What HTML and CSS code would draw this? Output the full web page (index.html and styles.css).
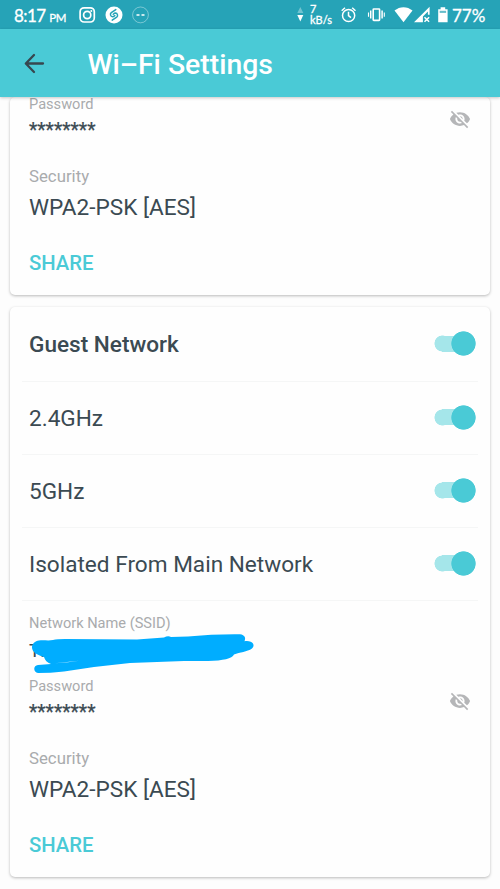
FILE: index.html
```html
<!DOCTYPE html>
<html lang="en">
<head>
<meta charset="utf-8">
<title>Wi–Fi Settings</title>
<link rel="stylesheet" href="styles.css">
</head>
<body>
<div class="status">
  <span class="clock">8:17 <small>PM</small></span>
  <svg class="apps" width="72" height="20" viewBox="78 5 72 20" fill="none" stroke="#fff">
    <rect x="80.1" y="7.8" width="14.2" height="14.2" rx="4" stroke-width="1.7"/>
    <circle cx="87.2" cy="15" r="3.6" stroke-width="1.7"/><circle cx="91.3" cy="10.9" r="1" fill="#fff" stroke="none"/>
    <circle cx="114" cy="14.9" r="8.5" fill="#fff" stroke="none"/>
    <path d="M115.800 9.600L111.300 12.600C109.600 14 110.600 16.600 112.500 16.700C113.700 16.700 114.300 16 114.800 15.500M112.200 20.200L116.700 17.200C118.400 15.800 117.400 13.200 115.500 13.100C114.300 13.100 113.700 13.800 113.200 14.300" stroke="#26a3b7" stroke-width="1.500" stroke-linecap="round"/>
    <circle cx="140.500" cy="14.900" r="7.900" stroke-opacity=".38" stroke-width="1"/>
    <path d="M136.500 15h3M141.500 15h3" stroke-width="1.700"/>
  </svg>
  <svg class="speed-arrows" width="8" height="18" viewBox="296 7 8 18" fill="#fff"><path opacity=".35" d="M300.300 8l3 6h-6z"/><path d="M297.300 16h6l-3 6.500z"/></svg>
  <span class="speed"><span>7</span><span>kB/s</span></span>
  <svg class="system" width="110" height="22" viewBox="340 4 110 22" fill="none" stroke="#fff">
    <circle cx="348.600" cy="15.500" r="6.100" stroke-width="1.500"/><path d="M348.500 11.700v4l2.500 2M341.700 10.700l3.300-2.900M355.500 10.700l-3.300-2.900" stroke-width="1.500"/>
    <rect x="373.200" y="9" width="6.400" height="11.400" rx=".6" stroke-width="1.600"/><path d="M370.700 10.500v8M382.100 10.500v8" stroke-width="1.500"/><path d="M368.500 12.500v4.200M384.300 12.500v4.200" stroke-width="1.100"/>
    <path d="M394.500 10.500c5.400-4.500 12.600-4.500 18 0l-9 11.800z" fill="#fff" stroke="none"/>
    <path d="M414 22.300L429.600 6.700v8h-1.700v-3.200l-5 5v5.800z" fill="#fff" stroke="none"/>
    <path d="M424.500 17.200l4.600 4.600M429.100 17.200l-4.600 4.600" stroke-width="1.500"/>
    <path d="M438.200 9.300h2.400V7.200h4.600v2.100h2.400v13h-9.400z" fill="#fff" stroke="none"/><path d="M439.700 10.800h6.400v2.100h-6.400z" fill="#66bdca" stroke="none"/>
  </svg>
  <span class="battery">77%</span>
</div>
<header class="toolbar">
  <svg class="back" width="22" height="22" viewBox="0 0 22 22" fill="none" stroke="#37474f" stroke-width="2.300" stroke-linecap="round" stroke-linejoin="round"><path d="M20 10.500H3M11 2L2.800 10.500L11 19"/></svg>
  <h1>Wi–Fi Settings</h1>
</header>
<main>
  <section class="card first">
    <div class="details">
      <div class="label">Password</div>
      <div class="secret"><span>********</span>
        <svg class="eye" viewBox="0 0 24 24"><path d="M12 7c2.760 0 5 2.240 5 5 0 .650-.130 1.260-.360 1.830l2.920 2.920c1.510-1.260 2.700-2.890 3.430-4.750-1.730-4.390-6-7.500-11-7.500-1.400 0-2.740.250-3.980.700l2.160 2.160C10.740 7.130 11.350 7 12 7zM2 4.270l2.280 2.280.460.460C3.080 8.300 1.780 10.020 1 12c1.730 4.390 6 7.500 11 7.500 1.550 0 3.030-.300 4.380-.840l.420.420L19.730 22 21 20.730 3.270 3 2 4.270zM7.530 9.800l1.550 1.550c-.050.210-.080.430-.080.650 0 1.660 1.340 3 3 3 .220 0 .440-.030.650-.080l1.550 1.550c-.670.330-1.410.530-2.200.530-2.760 0-5-2.240-5-5 0-.790.200-1.530.530-2.200zm4.310-.780l3.150 3.150.020-.160c0-1.660-1.340-3-3-3l-.170.010z"/></svg>
      </div>
      <div class="label security">Security</div>
      <div class="value">WPA2-PSK [AES]</div>
      <div class="share">SHARE</div>
    </div>
  </section>
  <section class="card">
    <div class="row heading"><span>Guest Network</span><i class="switch"></i></div>
    <div class="row"><span>2.4GHz</span><i class="switch"></i></div>
    <div class="row"><span>5GHz</span><i class="switch"></i></div>
    <div class="row"><span>Isolated From Main Network</span><i class="switch"></i></div>
    <div class="details">
      <div class="label">Network Name (SSID)</div>
      <div class="ssid">Ti
        <svg class="scribble" width="226" height="42" viewBox="30 632 226 42" fill="#00adff"><path d="M39 640.500C44 640 49 641 53 640Q57 639 65 639L137 639.500L164 637.500Q168 635.500 171 637L188 636.500Q214 634 240 634.300C245 635 246 638 244.500 641.300C252 640 256 645 252 648.500C247 652 240 652 234 654.500Q231 660.500 208 661L184 661L130 663L94 667L64 671.500Q50 673 38 673C33 672 33 665.500 38 665L51 664C47 662.500 45 660.500 44 657C37 655 32 652 32 647.500C32 643.500 35 641 39 640.500Z"/><path d="M55 663.300L79 660.800L68 662.300Z" fill="#fefefe"/></svg>
      </div>
      <div class="label">Password</div>
      <div class="secret"><span>********</span>
        <svg class="eye" viewBox="0 0 24 24"><path d="M12 7c2.760 0 5 2.240 5 5 0 .650-.130 1.260-.360 1.830l2.920 2.920c1.510-1.260 2.700-2.890 3.430-4.750-1.730-4.390-6-7.500-11-7.500-1.400 0-2.740.250-3.980.700l2.160 2.160C10.740 7.130 11.350 7 12 7zM2 4.270l2.280 2.280.460.460C3.080 8.300 1.780 10.020 1 12c1.730 4.390 6 7.500 11 7.500 1.550 0 3.030-.300 4.380-.840l.420.420L19.730 22 21 20.730 3.270 3 2 4.270zM7.530 9.800l1.550 1.550c-.050.210-.080.430-.080.650 0 1.660 1.340 3 3 3 .220 0 .440-.030.650-.080l1.550 1.550c-.670.330-1.410.530-2.200.530-2.760 0-5-2.240-5-5 0-.790.200-1.530.530-2.200zm4.310-.780l3.150 3.150.020-.160c0-1.660-1.340-3-3-3l-.170.010z"/></svg>
      </div>
      <div class="label security">Security</div>
      <div class="value">WPA2-PSK [AES]</div>
      <div class="share">SHARE</div>
    </div>
  </section>
</main>
</body>
</html>
```
FILE: styles.css
```css
* { box-sizing: border-box; }
body {
  margin: 0;
  height: 889px;
  overflow: hidden;
  display: flex;
  flex-direction: column;
  background: #fdfdfd;
  color: #3b4a52;
  font-family: Roboto, "Liberation Sans", sans-serif;
}
svg { display: block; flex: none; }
.status {
  flex: none;
  height: 29px;
  display: flex;
  align-items: center;
  padding: 2px 0 0 14px;
  background: #26a3b7;
  color: #fff;
  font-family: Lato, sans-serif;
  -webkit-text-stroke: .3px #fff;
  white-space: nowrap;
}
.status svg { margin-top: -1px; }
.clock { width: 64px; font-size: 17px; letter-spacing: -.6px; }
.clock small { font-size: 11.500px; margin-left: 0; letter-spacing: -.3px; }
.speed-arrows { margin-left: 146px; }
.speed {
  display: flex;
  flex-direction: column;
  width: 34px;
  margin: -3px 0 0 6px;
  font-size: 11px;
  line-height: 11px;
}
.system { margin-left: -4px; }
.battery { margin-left: 2px; font-size: 17px; }
.toolbar {
  flex: none;
  height: 68px;
  display: flex;
  align-items: center;
  padding: 2px 0 0 23px;
  background: #4acad6;
  box-shadow: 0 1px 3px rgba(0, 0, 0, .22);
  z-index: 1;
}
.back { margin-top: -1px; }
h1 {
  margin: 1px 0 0 42.500px;
  color: #fff;
  font-size: 28.400px;
  font-weight: 500;
  line-height: 34px;
}
main { flex: 1; overflow: hidden; padding: 0 10px; }
.card {
  margin-bottom: 12px;
  border-radius: 5px;
  background: #fefefe;
  box-shadow: 0 1px 3px rgba(0, 0, 0, .27);
}
.first { height: 198px; }
.first .details { display: flow-root; padding-top: 0; }
.first .label:first-child { margin-top: -3px; }
.row {
  height: 73px;
  display: flex;
  align-items: center;
  justify-content: space-between;
  margin: 0 12px;
  padding: 0 2px 0 7px;
  border-bottom: 1px solid #f5f6f6;
  font-size: 22.600px;
}
.heading { height: 75px; padding-top: 1px; font-weight: 500; }
.switch {
  width: 42px;
  height: 25px;
  margin-top: -2px;
  background:
    radial-gradient(circle at 29.500px 12.500px, #4acad6 11.800px, transparent 12.500px),
    linear-gradient(#a5e6ea, #a5e6ea) 8px 4.500px / 22px 16px no-repeat,
    radial-gradient(circle at 8.500px 12.500px, #a5e6ea 7.700px, transparent 8.300px);
}
.details { padding: 12px 19px 17px; }
.label { height: 20px; line-height: 20px; font-size: 14.600px; color: #a9abad; }
.ssid { position: relative; height: 27px; line-height: 27px; margin: 4px 0 12px; font-size: 19px; }
.scribble { position: absolute; left: 1px; top: -5px; }
.secret {
  height: 39px;
  display: flex;
  align-items: center;
  justify-content: space-between;
  font-size: 19.300px;
}
.secret span { margin-top: -7px; -webkit-text-stroke: .25px #3b4a52; }
.eye { width: 22px; height: 22px; margin: -29px 0 0; fill: #b5b6b8; }
.security { margin-top: 13px; font-size: 16.800px; }
.value { height: 30px; line-height: 30px; margin-top: 7px; font-size: 22.600px; }
.share { height: 30px; line-height: 30px; margin-top: 25px; font-size: 20.300px; font-weight: 500; color: #4acad6; }
```
